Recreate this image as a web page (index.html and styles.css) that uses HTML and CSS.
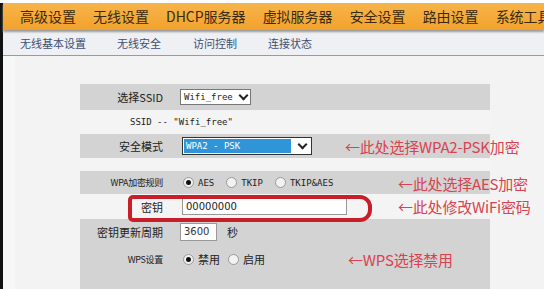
FILE: index.html
```html
<!DOCTYPE html>
<html lang="zh-CN">
<head>
  <meta charset="utf-8">
  <title>无线安全</title>
  <link rel="stylesheet" href="styles.css">
</head>
<body>
<div class="frame">
  <div class="topnav">
    <a href="#">高级设置</a>
    <a href="#" class="cur">无线设置</a>
    <a href="#">DHCP服务器</a>
    <a href="#">虚拟服务器</a>
    <a href="#">安全设置</a>
    <a href="#">路由设置</a>
    <a href="#">系统工具</a>
  </div>
  <div class="subnav">
    <a href="#">无线基本设置</a>
    <a href="#">无线安全</a>
    <a href="#">访问控制</a>
    <a href="#">连接状态</a>
  </div>
  <div class="content">
    <div class="panel">
      <div class="row grey r1">
        <span class="lbl">选择SSID</span>
        <span class="val"><span class="sel">Wifi_free<i class="dd"></i></span></span>
      </div>
      <div class="row r2">
        <span class="lbl"></span>
        <span class="val note">SSID -- "Wifi_free"</span>
      </div>
      <div class="row grey r3">
        <span class="lbl">安全模式</span>
        <span class="val"><span class="sel blue"><b>WPA2 - PSK</b><i class="dd"></i></span></span>
        <span class="tip tip-near">←此处选择WPA2-PSK加密</span>
      </div>
      <div class="spacer"></div>
      <div class="row grey r4">
        <span class="lbl small">WPA加密规则</span>
        <span class="val radios">
          <label><i class="radio on"></i>AES</label>
          <label><i class="radio"></i>TKIP</label>
          <label><i class="radio"></i>TKIP&amp;AES</label>
        </span>
        <span class="tip tip-far">←此处选择AES加密</span>
      </div>
      <div class="row r5">
        <span class="lbl">密钥</span>
        <span class="val"><span class="inp wide">00000000</span></span>
        <span class="tip tip-far">←此处修改WiFi密码</span>
        <span class="mark"></span>
      </div>
      <div class="grey block">
        <div class="row r6">
          <span class="lbl">密钥更新周期</span>
          <span class="val"><span class="inp short">3600</span><span class="unit">秒</span></span>
        </div>
        <div class="row r7">
          <span class="lbl small">WPS设置</span>
          <span class="val radios cn">
            <label><i class="radio on"></i>禁用</label>
            <label><i class="radio"></i>启用</label>
          </span>
          <span class="tip tip-wps">←WPS选择禁用</span>
        </div>
      </div>
    </div>
  </div>
</div>
</body>
</html>
```

FILE: styles.css
```css
body,div,span,a,label{margin:0;padding:0;}
a{text-decoration:none;}
body{width:544px;height:289px;overflow:hidden;background:#fff;font-family:"Noto Sans CJK SC","DejaVu Sans",sans-serif;}
.frame{height:286px;margin-top:3px;border-left:3px solid #111;background:#f3f3f3;}

/* 顶部橙色菜单 */
.topnav{display:flex;gap:17px;height:27px;padding-left:17px;align-items:center;white-space:nowrap;overflow:hidden;
  background:linear-gradient(#f7b44a,#f2a22c);box-shadow:0 2px 2px #9a9a9a;position:relative;z-index:2;}
.topnav a{font-size:14px;color:#3a2a12;line-height:27px;flex:none;}
.topnav .cur{position:relative;}
.topnav .cur:after{content:"";position:absolute;left:22px;top:27px;border-left:6px solid transparent;border-right:6px solid transparent;border-top:6px solid #8a8a8a;}

/* 二级菜单 */
.subnav{display:flex;height:25px;padding-left:17px;align-items:center;background:#eef0f3;border-bottom:1px solid #9a9a9a;}
.subnav a{font-size:11px;color:#3e4f73;margin-right:31px;}
.subnav a:nth-child(2){margin-right:32px;}

/* 内容 */
.content{padding:28px 0 0 65px;border-left:12px solid #f7f7f7;}
.panel{width:410px;background:#f4f4f4;}
.row{display:flex;align-items:center;position:relative;font-size:11px;color:#222;}
.grey{background:#d3d3d3;}
.r1{height:26px;}
.r2{height:24px;}
.r3{height:24px;}
.spacer{height:13px;}
.r4{height:23px;}
.r5{height:25px;}
.r6{height:25px;}
.r7{height:30px;}
.block{height:70px;}
.lbl{width:83px;text-align:right;flex:none;}
.lbl.small{font-size:9px;letter-spacing:-0.3px;}
.val{margin-left:17px;display:flex;align-items:center;}
.note{margin-left:-33px;font-family:"DejaVu Sans Mono",monospace;font-size:9px;}

.sel{display:inline-flex;align-items:center;height:14px;padding:0 0 0 3px;border:1px solid #777;background:#fff;font-family:"DejaVu Sans Mono",monospace;font-size:9px;}
.sel .dd{display:inline-block;width:13px;height:14px;position:relative;margin-left:4px;}
.sel .dd:after{content:"";position:absolute;left:3px;top:2px;width:5px;height:5px;border-right:2px solid #222;border-bottom:2px solid #222;transform:rotate(45deg);}
.sel.blue{width:128px;height:16px;margin-left:2px;padding:0;border-color:#333;}
.sel.blue b{flex:1;height:14px;margin:1px;background:#2f95d8;color:#fff;font-weight:normal;line-height:14px;padding-left:2px;}
.sel.blue .dd{background:#fff;width:15px;}

.radios label{display:inline-flex;align-items:center;font-family:"DejaVu Sans Mono",monospace;font-size:9px;margin-right:12px;}
.radios label:first-child{margin-left:3px;}
.radios.cn label{font-family:"Noto Sans CJK SC",sans-serif;font-size:11px;margin-right:8px;}
.radio{display:inline-block;width:9px;height:9px;border-radius:50%;border:1px solid #999;background:#f2f2f2;margin-right:4px;position:relative;}
.radio.on:after{content:"";position:absolute;left:2px;top:2px;width:5px;height:5px;border-radius:50%;background:#111;}

.inp{display:inline-block;height:15px;line-height:15px;border:1px solid #999;background:#fff;font-size:10px;padding-left:3px;font-family:"DejaVu Sans",sans-serif;}
.inp.wide{width:160px;margin-left:2px;}
.inp.short{width:32px;height:16px;color:#333;}
.unit{margin-left:10px;font-size:11px;}

.tip{font-family:"Noto Sans CJK SC",sans-serif;font-size:15px;color:#d9424f;white-space:nowrap;letter-spacing:-0.2px;}
.tip-near{margin-left:33px;}
.tip-far{position:absolute;left:318px;top:2px;}
.tip-wps{margin-left:75px;}

/* 红色圈注 */
.mark{position:absolute;left:48px;top:1px;width:236px;height:19px;border:4px solid #c81e28;border-radius:5px 12px 12px 5px;}
```
